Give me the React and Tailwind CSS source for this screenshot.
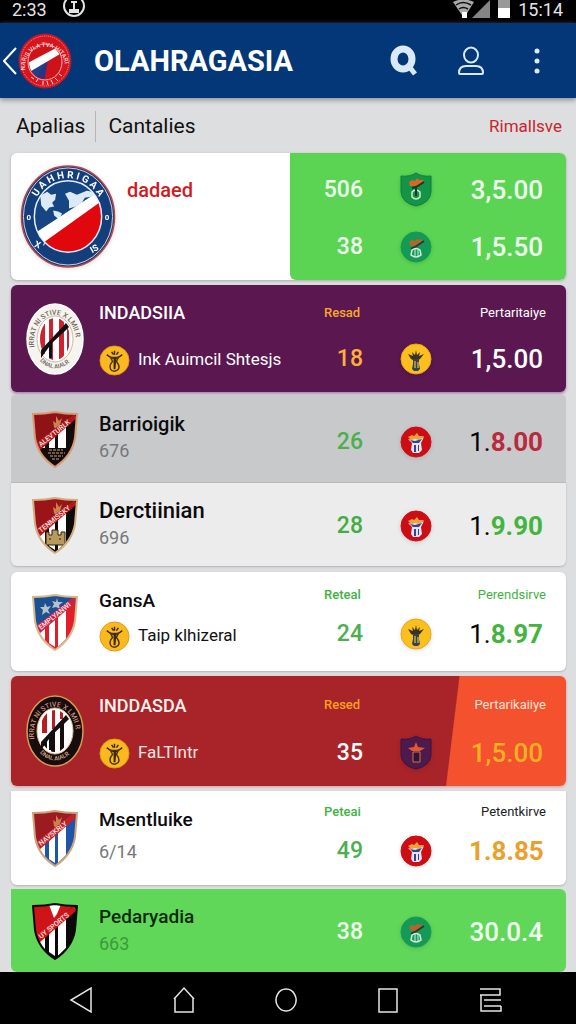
import { useState } from "react";

const FONT = "font-['Roboto','Liberation_Sans',sans-serif]";

// TEAM ROWS
const teams = [
    {
        id: 1, name: "INDADSIIA", sub: "Ink Auimcil Shtesjs", coin: true, crest: "ovalLight",
        card: "bg-[#5b174f] rounded-md shadow-[0_2px_3px_#a58ab0] mt-[5px]",
        left: "pt-4 pb-[17px] gap-5", right: "pt-5 gap-[23px]",
        nameColor: "text-white text-[18px]", subColor: "text-white",
        label: "Resad", labelColor: "text-[#f9a825]", labelRight: "Pertaritaiye", labelRightColor: "text-white",
        points: "18", pointsColor: "text-[#fbb03b]", badge: "yellow",
        price: [["1,5.00", "text-white"]],
    },
    {
        id: 2, name: "Barrioigik", sub: "676", crest: "black",
        card: "bg-[#c8c9cb] rounded-t-sm mt-[3px]",
        left: "pt-[17px] pb-[21px] gap-[5px]", right: "pt-8",
        nameColor: "text-[#0b0b0b] text-[20px]", subColor: "text-[#77787a]",
        points: "26", pointsColor: "text-[#4caf50]", badge: "red",
        price: [["1.", "text-black font-normal"], ["8.00", "text-[#b92a3c] font-bold"]],
    },
    {
        id: 3, name: "Derctiinian", sub: "696", crest: "castle",
        card: "bg-[#ececed] rounded-b-md shadow-[0_1px_2px_#b5b5b8] border-t border-[#b9babc]",
        left: "pt-4 pb-[18px] gap-[5px]", right: "pt-7",
        nameColor: "text-[#0b0b0b] text-[22px]", subColor: "text-[#77787a]",
        points: "28", pointsColor: "text-[#43ad42]", badge: "red",
        price: [["1.", "text-black font-normal"], ["9.90", "text-[#43b53f] font-bold"]],
    },
    {
        id: 4, name: "GansA", sub: "Taip klhizeral", coin: true, crest: "usa",
        card: "bg-white rounded-md shadow-[0_1px_2px_#b5b5b8] mt-[6px]",
        left: "pt-[17px] pb-5 gap-2", right: "pt-[15px] gap-4",
        nameColor: "text-[#0b0b0b] text-[19px]", subColor: "text-[#111]",
        label: "Reteal", labelColor: "text-[#3fb23f]", labelRight: "Perendsirve", labelRightColor: "text-[#3fb23f]",
        points: "24", pointsColor: "text-[#4caf50]", badge: "yellow",
        price: [["1.", "text-black font-normal"], ["8.97", "text-[#43b53f] font-bold"]],
    },
    {
        id: 5, name: "INDDASDA", sub: "FaLTlntr", coin: true, crest: "ovalDark",
        card: "bg-[linear-gradient(97deg,#a92428_78.8%,#f4512f_79%)] rounded-md shadow-[0_1px_3px_#d79a9a] mt-[5px]",
        left: "pt-[18px] pb-[18px] gap-5", right: "pt-[21px] gap-[25px]",
        nameColor: "text-[#fff1ee] text-[18px]", subColor: "text-[#ffe3e0]",
        label: "Resed", labelColor: "text-[#f9a01b]", labelRight: "Pertarikaiiye", labelRightColor: "text-[#ffe3d6]",
        points: "35", pointsColor: "text-white", badge: "purple",
        price: [["1,5.00", "text-[#fdb022]"]],
    },
    {
        id: 6, name: "Msentluike", sub: "6/14", crest: "blue",
        card: "bg-white rounded-b-md shadow-[0_1px_2px_#b5b5b8] mt-[5px]",
        left: "pt-[17px] pb-[23px] gap-[10px]", right: "pt-[13px] gap-4",
        nameColor: "text-[#0b0b0b] text-[19px]", subColor: "text-[#77787a]",
        label: "Peteai", labelColor: "text-[#3fb23f]", labelRight: "Petentkirve", labelRightColor: "text-[#222]",
        points: "49", pointsColor: "text-[#4caf50]", badge: "red",
        price: [["1.8.85", "text-[#eba02c] font-bold"]],
    },
    {
        id: 7, name: "Pedaryadia", sub: "663", crest: "redBlack",
        card: "bg-[#61d75a] rounded-b-md rounded-tr-md mt-1",
        left: "pt-4 pb-[18px] gap-[5px]", right: "pt-7",
        nameColor: "text-[#0d2a0c] text-[19px]", subColor: "text-[#3b9a3a]",
        points: "38", pointsColor: "text-[#effff0]", badge: "green",
        price: [["30.0.4", "text-[#effff0]"]],
    },
];

const shields = {
    black: { field: "#8f1216", dark: "#120c0c", edge: "#d79a72", band: "#b3161b", text: "ALEVTURLK", foot: true },
    castle: { field: "#9a1418", dark: "#0d0a0a", edge: "#cfae80", band: "#b3161b", text: "TENMISSKY", castle: true },
    usa: { field: "#1d4f93", dark: "#e01f2c", edge: "#d8b98c", band: "#c2254c", text: "EMPLYANWI", stars: true },
    blue: { field: "#9b1b20", dark: "#1d55a8", edge: "#cfa37a", band: "#c61f27", text: "NAVSKRLY" },
    redBlack: { field: "#cf1418", dark: "#0b0a0a", edge: "#0b0a0a", band: "#cf1418", text: "UY SPORTS", top: true },
};

function Shield({ type }) {
    const s = shields[type];
    const shape = "M1 4Q13 4 23 2Q33 4 45 4L43 28Q40 46 23 57Q6 46 3 28Z";
    return (
        <svg viewBox="0 0 46 58" className="w-[46px] h-[58px]" aria-hidden="true">
            <clipPath id={`clip-${type}`}><path d={shape} /></clipPath>
            <g clipPath={`url(#clip-${type})`}>
                <rect width="46" height="58" fill={s.dark} />
                <path d="M0 0H46L0 40Z" fill={s.field} />
                {s.top && <path d="M16 0h14l-5 12-3 4z" fill="#fff" />}
                <path d="M17 28l6-6v32l-6-4z" fill="#fff" />
                <path d="M26 20l8-8v34l-8 8z" fill="#fff" />
                <path d="M7 36l6-5v18l-6-7z" fill="#fff" />
                {s.foot && <>
                    <path d="M4 38H43V58H4Z" fill="#120c0c" />
                    <path d="M17 40h14M16 43h17M18 46h13M20 49h8" stroke="#c9a27c" strokeWidth="1" strokeDasharray="3 1" />
                </>}
                {s.castle && <path d="M14 49V36h3v3h3v-5h6v5h3v-3h4v13z M17 43h2M27 43h2" fill="#b99a5b" stroke="#2a1b0c" strokeWidth="1" />}
                {s.stars && <path d="M13 10l2 4 4-1-3 4 2 4-4-2-4 3 1-5-3-3h4zM25 5l1 4 5 0-4 3 1 4-4-2-4 1 2-4-2-3 4 1z" fill="#b9c2c4" />}
                {!s.stars && !s.top && <path d="M22 17l-1-6 3 2 0-7 3 5 3-3-2 7-4 5z" fill="#c9824a" />}
                <path d="M4 33L42 4l3 4L7 41Z" fill={s.band} />
                <text x="0" y="0" transform="translate(9 37) rotate(-39)" fill="#ffe9e4" fontSize="7" fontWeight="500">{s.text}</text>
            </g>
            <path d={shape} fill="none" stroke={s.edge} strokeWidth="2" />
        </svg>
    );
}

function OvalCrest({ dark }) {
    const id = dark ? "oval-dark" : "oval-light";
    return (
        <svg viewBox="0 0 58 72" className="w-[58px] h-[72px]" aria-hidden="true">
            <ellipse cx="29" cy="36" rx="28" ry="35" fill={dark ? "#160d0c" : "#f7f3ee"} stroke={dark ? "#d79a52" : "#fff"} strokeWidth="1.5" />
            <ellipse cx="29" cy="36" rx="18" ry="23" fill="#fff" stroke={dark ? "#e5b98a" : "#c9bd9c"} />
            <clipPath id={`${id}-clip`}><ellipse cx="29" cy="36" rx="15" ry="21" /></clipPath>
            <g clipPath={`url(#${id}-clip)`}>
                {dark
                    ? <path d="M16 10h5v28h-5zM26 10h3v24h-3zM34 10h3v14h-3z" fill="#b71c22" />
                    : <path d="M13 10h6v50h-6zM23 10h4v50h-4zM33 10h5v50h-5zM41 10h2v50h-2z" fill="#cf2230" />}
                {dark && <path d="M18 44h3v20h-3zM25 36h4v24h-4zM34 28h4v32h-4z" fill="#160d0c" />}
            </g>
            <path d="M15 47L40 20l3 4-4 4-13 12v15h-3V44l-8 11z" fill="#111" />
            <path id={id} d="M9 47A21 27 0 1 1 49 47" fill="none" />
            <path id={`${id}-b`} d="M9 50A23 29 0 0 0 50 49" fill="none" />
            <text fill={dark ? "#c98f82" : "#6b665e"} fontSize="7" fontWeight="500">
                <textPath href={`#${id}`} startOffset="3">IRRAT NI STIVE X LMII R</textPath>
            </text>
            <text fill={dark ? "#d7a98c" : "#6b665e"} fontSize="6" fontWeight="500">
                <textPath href={`#${id}-b`} startOffset="9">DNAL AIALR</textPath>
            </text>
        </svg>
    );
}

// small figure that sits inside the coins and the badges
function Figure({ arms, body, inner }) {
    return (
        <>
            <path d="M8 11l5 2-1-4 3 3 1-5 1 5 3-3-1 4 5-2-4 5-2 1h-5l-2-1z" fill={arms} />
            <path d="M13 16h6v5l1 5-2 2h-4l-2-2 1-5z" fill={body} />
            <path d="M15 18v7M18 19v6" stroke={inner} strokeWidth="1.5" />
        </>
    );
}

function Coin() {
    return (
        <svg viewBox="0 0 32 32" className="size-[31px] shrink-0" aria-hidden="true">
            <circle cx="16" cy="16" r="15" fill="#fbb91e" stroke="#dd9a1c" strokeWidth="1" />
            <path d="M8 10q5 4 8 4t8-4M13 7l2 3M20 7l-2 3M16 6v4" fill="none" stroke="#3a2a10" strokeWidth="1.5" />
            <path d="M12 13h8l-2 4q4 5 2 8-2 2-4 2-3 0-4-2-2-4 2-8z" fill="none" stroke="#4a3510" strokeWidth="1.5" />
            <path d="M15 13h3l-1 12h-2z" fill="#3a2a10" />
        </svg>
    );
}

function Badge({ type }) {
    if (type === "shield" || type === "purple") {
        const purple = type === "purple";
        return (
            <svg viewBox="0 0 32 36" className="w-8 h-9 drop-shadow-sm" aria-hidden="true">
                <path d="M1 4Q10 5 16 1 22 5 31 4V20Q30 31 16 34 2 31 1 20Z" fill={purple ? "#4c1a4d" : "#149447"} stroke={purple ? "#3d143f" : "#0f7f3b"} />
                {purple
                    ? <><path d="M8 13l6-1 2-5 2 5 7 1-5 3H12z" fill="#e2572e" /><path d="M13 17h7v10h-7z" fill="#34103a" stroke="#c6764b" /></>
                    : <><path d="M9 10l3-2 3 1 2-3 2 2 5 0-4 6H10z" fill="#d9652a" /><path d="M24 10l-8 5-4 1" stroke="#183a24" strokeWidth="2" fill="none" /><path d="M12 20q4-4 8 0v5q-4 4-8 0z" fill="none" stroke="#cfe8d4" strokeWidth="1.5" /><path d="M16 16v8" stroke="#183a24" strokeWidth="2" /></>}
            </svg>
        );
    }
    const fill = { yellow: "#fcc01c", red: "#cc0d14", green: "#149a55" }[type];
    return (
        <svg viewBox="0 0 32 32" className="size-8 drop-shadow-sm" aria-hidden="true">
            <circle cx="16" cy="16" r="15" fill={fill} stroke={type === "yellow" ? "#e6a521" : fill} />
            {type === "yellow" && <Figure arms="#3a3320" body="#33405a" inner="#c8a640" />}
            {type === "red" && (
                <>
                    <path d="M8 11l4-2 2 1 3-3 2 3 5 0-4 5h-8z" fill="#f0a23a" />
                    <path d="M8 13l4 1 3-1 4 1 5-3-3 6 1 7-3 3h-6l-2-3 1-7z" fill="#e6e2f2" />
                    <path d="M10 14l5 1 7-2-3 4h-6zM14 19h2v7h-2zM18 19h1v6h-1z" fill="#2f4590" />
                </>
            )}
            {type === "green" && <><path d="M9 11l3-2 3 1 2-2 6 1-4 6h-8z" fill="#b5652c" /><path d="M24 10l-9 6-4 2" stroke="#1b3f37" strokeWidth="2" fill="none" /><path d="M12 19q4-3 8 0l1 5q-5 4-10 0z" fill="none" stroke="#d2ece2" strokeWidth="1.5" /><path d="M15 18v8M18 18v7" stroke="#d2ece2" strokeWidth="1" /></>}
        </svg>
    );
}

function MainLogo() {
    return (
        <svg viewBox="0 0 96 104" className="w-24 h-[103px] drop-shadow-sm" aria-hidden="true">
            <ellipse cx="48" cy="52" rx="47" ry="51" fill="#123f7c" stroke="#b5484d" strokeWidth="1.5" />
            <ellipse cx="48" cy="52" rx="45" ry="49" fill="none" stroke="#e3c5c9" strokeWidth="1" />
            <clipPath id="main-clip"><ellipse cx="48" cy="52" rx="34" ry="36" /></clipPath>
            <g clipPath="url(#main-clip)">
                <rect width="96" height="104" fill="#154582" />
                <path d="M20 31l7-4 4 3 5-1-1 6-3 3 2 4-5 1-3 4-5-6zM33 46l5 1 4 2-3 6-5-4zM45 29l5-2 7 3 10-4 12 2-8 4-6 1-3 5-6 4-7 2 0-8z" fill="#dce9f7" />
                <path d="M8 73L83 24v16L22 84Z" fill="#fff" />
                <path d="M18 82L88 32V92H24Z" fill="#e0070d" />
            </g>
            <ellipse cx="48" cy="52" rx="34" ry="36" fill="none" stroke="#e6eefa" strokeWidth="1.5" />
            <path id="main-arc" d="M15 36A36 38 0 0 1 81 36" fill="none" />
            <text fill="#fff" fontSize="10" fontWeight="700"><textPath href="#main-arc" startOffset="4">U A H H R I G A A</textPath></text>
            <text x="6" y="56" fill="#fff" fontSize="8" fontWeight="700">0</text>
            <text x="85" y="56" fill="#fff" fontSize="8" fontWeight="700">0</text>
            <text x="14" y="83" fill="#fff" fontSize="9" fontWeight="700" transform="rotate(20 16 82)">X '</text>
            <text x="71" y="88" fill="#fff" fontSize="9" fontWeight="700" transform="rotate(-30 74 86)">IS</text>
        </svg>
    );
}

function HeaderLogo() {
    return (
        <svg viewBox="0 0 54 56" className="w-[54px] h-14" aria-hidden="true">
            <ellipse cx="27" cy="28" rx="26" ry="27" fill="#d8141c" stroke="#a81f3a" />
            <ellipse cx="27" cy="28" rx="24" ry="25" fill="none" stroke="#f09a9c" strokeWidth="1" strokeDasharray="1 1" />
            <clipPath id="head-clip"><ellipse cx="27" cy="29" rx="16" ry="17" /></clipPath>
            <g clipPath="url(#head-clip)">
                <rect width="54" height="56" fill="#cf1119" />
                <path d="M8 37L30 26 22 48H8Z" fill="#1f3f8f" />
                <path d="M30 26L26 50l-8-4z" fill="#2c3480" />
                <path d="M6 32L42 13v8L8 41Z" fill="#fff" />
            </g>
            <ellipse cx="27" cy="29" rx="17" ry="18" fill="none" stroke="#f3b4b4" strokeWidth="1" />
            <path id="head-arc" d="M8 40A20 20 0 1 1 46 40" fill="none" />
            <text fill="#ffd9d9" fontSize="6" fontWeight="500"><textPath href="#head-arc" startOffset="3">NARIS VLA TVA HITARI</textPath></text>
            <path d="M13 44l3 2M18 49l2-3M25 48v4M29 48l1 4M33 47l2 4M37 45l3 3M41 41l3 2" stroke="#ffd9d9" strokeWidth="1" />
        </svg>
    );
}

function Crest({ type }) {
    if (type === "ovalLight") return <OvalCrest />;
    if (type === "ovalDark") return <OvalCrest dark />;
    return <Shield type={type} />;
}

function ScoreLine({ points, pointsColor, badge, price }) {
    return (
        <div className="flex items-center h-[30px]">
            <div className={`w-[73px] shrink-0 text-right text-[23px] font-medium ${pointsColor}`}>{points}</div>
            <div className="w-[106px] shrink-0 flex justify-center"><Badge type={badge} /></div>
            <div className="flex-1 flex justify-end pr-[23px] text-[26px] font-medium whitespace-nowrap">
                {price.map(([text, color]) => <span key={text} className={color}>{text}</span>)}
            </div>
        </div>
    );
}

function TeamCard({ team }) {
    return (
        <li className={`flex ${team.card}`}>
            <div className="w-[88px] shrink-0 flex items-center justify-center"><Crest type={team.crest} /></div>
            <div className={`flex-1 min-w-0 flex flex-col ${team.left}`}>
                <h2 className={`leading-6 font-medium whitespace-nowrap ${team.nameColor}`}>{team.name}</h2>
                {team.coin
                    ? <div className={`flex items-center gap-2 h-[30px] text-[17px] whitespace-nowrap ${team.subColor}`}><Coin />{team.sub}</div>
                    : <p className={`text-[18px] leading-5 ${team.subColor}`}>{team.sub}</p>}
            </div>
            <div className={`w-[276px] shrink-0 flex flex-col ${team.right}`}>
                {team.label && (
                    <div className="flex justify-between pl-[34px] pr-5 text-[13px] leading-4">
                        <span className={`font-medium ${team.labelColor}`}>{team.label}</span>
                        <span className={team.labelRightColor}>{team.labelRight}</span>
                    </div>
                )}
                <ScoreLine {...team} />
            </div>
        </li>
    );
}

function StatusBar() {
    return (
        <div className="h-[23px] bg-black text-[#e4e4e4] flex items-start justify-between pl-3 pr-[13px]">
            <div className="flex gap-4">
                <span className="text-[18px] leading-5">2:33</span>
                <svg viewBox="0 0 22 18" className="w-[22px] h-[18px]" fill="none" stroke="currentColor" strokeWidth="2" aria-hidden="true">
                    <circle cx="11" cy="6" r="10" />
                    <path d="M8 2h6M11 2v7M7 10h8v2H7z" />
                </svg>
            </div>
            <div className="flex gap-[5px]">
                <svg viewBox="0 0 60 20" className="w-[60px] h-5" aria-hidden="true">
                    <path d="M0 2Q10-3 21 2L11 18Z" fill="#aaa" />
                    <path d="M3 5Q10 0 18 5M6 9Q10 6 15 9" fill="none" stroke="#111" strokeWidth="1.5" />
                    <path d="M9 12h5v6H9z" fill="#fff" />
                    <path d="M37 0V18H19Z" fill="#858585" />
                    <path d="M45 0h12v8H45z" fill="#999" />
                    <path d="M45 8h12v10H45z" fill="#fff" />
                </svg>
                <span className="text-[18px] leading-5">15:14</span>
            </div>
        </div>
    );
}

function Header() {
    return (
        <header className="h-[75px] bg-[#043778] flex items-center shadow-[0_2px_5px_#8a8d94] relative">
            <button aria-label="Back" className="pl-[3px]">
                <svg viewBox="0 0 14 28" className="w-[14px] h-7" fill="none" stroke="#fff" strokeWidth="2" aria-hidden="true"><path d="M13 1L1 14l12 13" /></svg>
            </button>
            <div className="pl-px"><HeaderLogo /></div>
            <h1 className="flex-1 pl-[22px] pt-0.5 text-[29px] font-bold text-white">OLAHRAGASIA</h1>
            <div className="flex items-center shrink-0 pr-9">
                <button aria-label="Search">
                    <svg viewBox="0 0 30 32" className="w-[30px] h-8" fill="none" stroke="#dbeafa" aria-hidden="true">
                        <ellipse cx="14" cy="14" rx="9" ry="10" strokeWidth="7" />
                        <path d="M19 20l7 9" strokeWidth="5" />
                    </svg>
                </button>
                <button aria-label="Account" className="ml-[38px]">
                    <svg viewBox="0 0 28 30" className="w-7 h-[30px]" fill="none" stroke="#dbeafa" strokeWidth="2" aria-hidden="true">
                        <ellipse cx="14" cy="9" rx="7" ry="7.5" />
                        <path d="M2 27Q2 20 9 20H19Q26 20 26 27Q26 28 25 28H3Q2 28 2 27Z" />
                    </svg>
                </button>
                <button aria-label="More" className="ml-[49px]">
                    <svg viewBox="0 0 6 26" className="w-[6px] h-[26px]" fill="#dbeafa" aria-hidden="true">
                        <circle cx="3" cy="3" r="2.5" /><circle cx="3" cy="13" r="2.5" /><circle cx="3" cy="23" r="2.5" />
                    </svg>
                </button>
            </div>
        </header>
    );
}

function NavBar() {
    const icons = [
        ["Back", "M23 3V27L3 15Z"],
        ["Home", "M3 14L13 3 23 14M4 13V27H22V13"],
        ["Circle", "M13 4a10 11 0 1 0 .1 0z"],
        ["Recent", "M4 4H22V27H4Z"],
        ["Menu", "M2 4H22V10H2M3 10V26H23V21M6 15H23M6 21H23"],
    ];
    return (
        <nav className="h-[52px] bg-black flex items-center pt-1 pl-[30px] pr-[34px]">
            {icons.map(([label, d]) => (
                <button key={label} aria-label={label} className="flex-1 flex justify-center">
                    <svg viewBox="0 0 26 30" className="w-[26px] h-[30px]" fill="none" stroke="#e6e6e6" strokeWidth="1.5" aria-hidden="true"><path d={d} /></svg>
                </button>
            ))}
        </nav>
    );
}

export default function App() {
    const [tab, setTab] = useState("apalias");

    return (
        <div className={`min-h-screen flex flex-col bg-[#dddee0] ${FONT}`}>
            <StatusBar />
            <Header />
            <main className="flex-1">
                <div className="h-[55px] flex items-center pl-4 pr-[14px] pt-0.5 text-[21px] text-[#111]">
                    <button aria-pressed={tab === "apalias"} onClick={() => setTab("apalias")} className="pr-[10px]">Apalias</button>
                    <button aria-pressed={tab === "cantalies"} onClick={() => setTab("cantalies")} className="pl-3 border-l border-[#b5b5b7]">Cantalies</button>
                    <a href="#all" className="ml-auto text-[17px] text-[#c8262c]">Rimallsve</a>
                </div>

                <section className="ml-[11px] mr-[10px] flex rounded-md bg-white overflow-hidden shadow-[0_1px_3px_#aaa]">
                    <div className="flex-1 flex pl-[9px] py-3 gap-[11px]">
                        <MainLogo />
                        <h2 className="pt-3 text-[20px] leading-[26px] font-medium text-[#cf1b1f]">dadaed</h2>
                    </div>
                    <div className="w-[276px] shrink-0 bg-[#5bd454] rounded-bl-md flex flex-col pt-[22px] gap-[27px]">
                        <ScoreLine points="506" pointsColor="text-[#effff0]" badge="shield" price={[["3,5.00", "text-[#effff0]"]]} />
                        <ScoreLine points="38" pointsColor="text-[#effff0]" badge="green" price={[["1,5.50", "text-[#effff0]"]]} />
                    </div>
                </section>

                <ul className="ml-[11px] mr-[10px]">
                    {teams.map((team) => <TeamCard key={team.id} team={team} />)}
                </ul>
            </main>
            <NavBar />
        </div>
    );
}
